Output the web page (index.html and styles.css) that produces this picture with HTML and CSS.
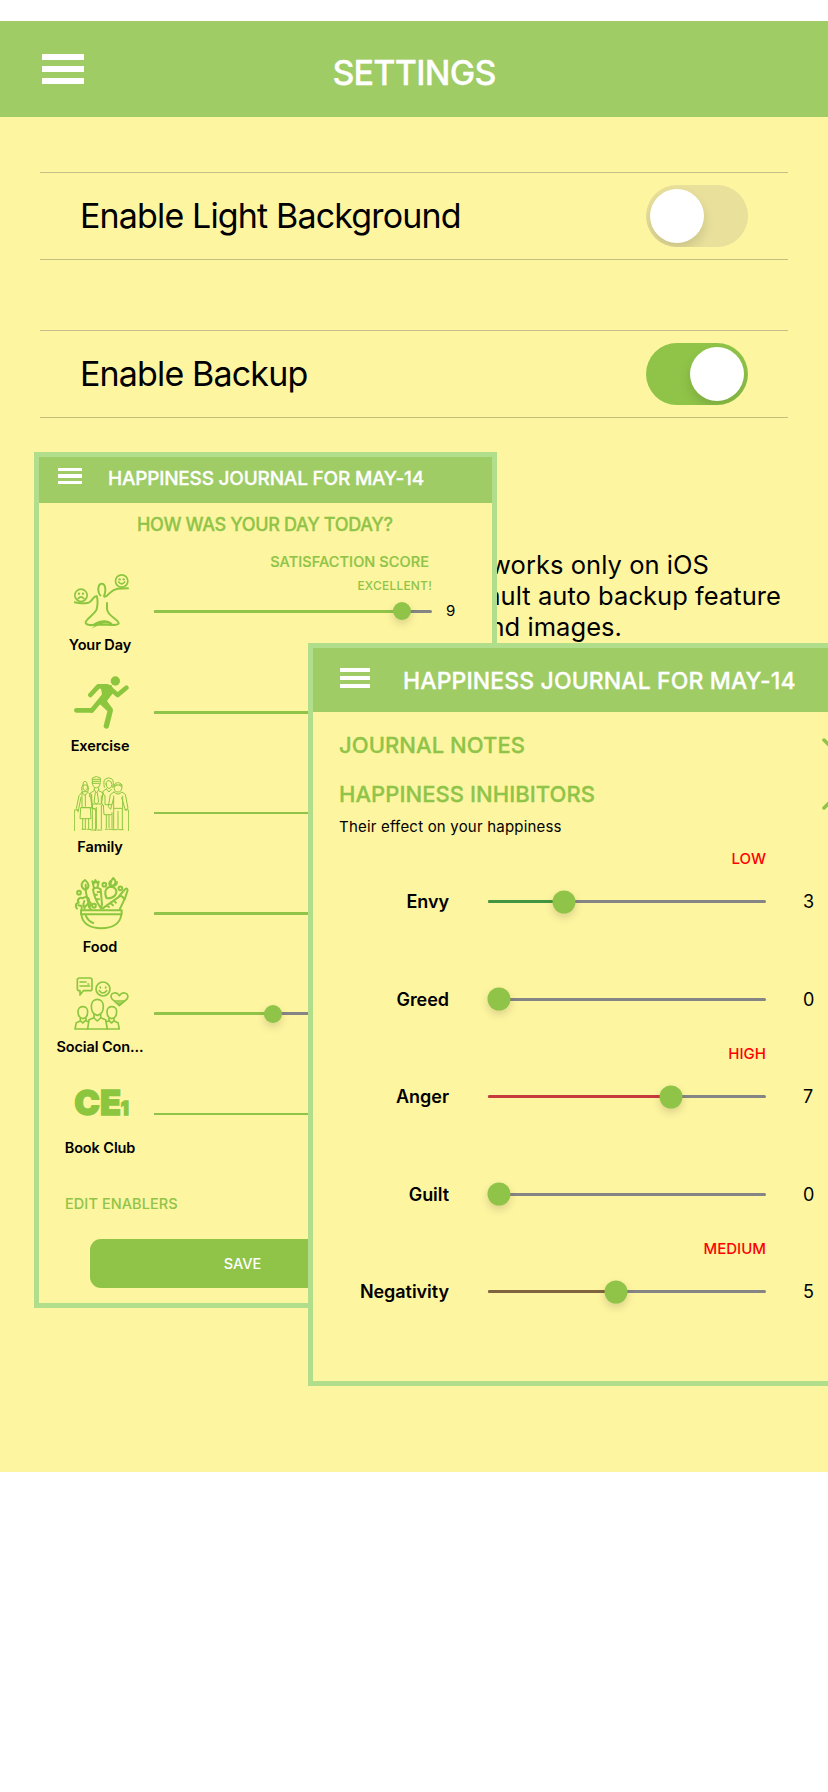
FILE: index.html
```html
<!DOCTYPE html>
<html lang="en">
<head>
<meta charset="utf-8">
<title>Settings</title>
<link rel="stylesheet" href="styles.css">
</head>
<body>
<main class="screen">
  <header class="topbar">
    <div class="burger"><i></i><i></i><i></i></div>
    <h1 class="topbar-title"><span>SETTINGS</span></h1>
  </header>

  <section class="setting">
    <span class="setting-label">Enable Light Background</span>
    <span class="toggle"></span>
  </section>
  <section class="setting">
    <span class="setting-label">Enable Backup</span>
    <span class="toggle on"></span>
  </section>
  <div class="note">
    <p class="note-a">works only on iOS</p>
    <p class="note-b">ault auto backup feature</p>
    <p class="note-c">nd images.</p>
  </div>

  <section class="card journal">
    <header class="card-head">
      <div class="burger"><i></i><i></i><i></i></div>
      <h2>HAPPINESS JOURNAL FOR MAY-14</h2>
    </header>
    <h3 class="question">HOW WAS YOUR DAY TODAY?</h3>
    <div class="score">SATISFACTION SCORE</div>
    <div class="rows">
      <div class="row first">
        <div class="who">
          <svg class="icon" viewBox="0 0 165 165">
            <g class="s5"><circle cx="143" cy="21" r="18.500"/><circle cx="21" cy="64" r="18.500"/>
            <path d="M134 24q9 11 18 0M12 74q9-11 18 0"/></g>
            <g class="f"><circle cx="137" cy="16" r="3.500"/><circle cx="149" cy="16" r="3.500"/><circle cx="15" cy="59" r="3.500"/><circle cx="27" cy="59" r="3.500"/>
            <path d="M52 165l10-9-13 1q17-17 40-18 17-1 30 13l-16-3q-21-4-51 16z"/></g>
            <path class="s6" d="M79 64C69 53 72 29 83 29c12 0 14 21 7 37q3 6 15-7c10-10 14-13 25-15q16 0 32-1M2 85q20 5 42 1c12-4 12-20 24-20 4 9 3 29 0 40-3 13-35 30-33 40 3 11 31 6 49 6 20 0 48 4 50-4 1-11-36-23-35-44V87"/>
          </svg>
          <span class="name">Your Day</span>
        </div>
        <div class="measure"><span class="level">EXCELLENT!</span>
          <div class="slider"><div class="fill" style="width:89.2%"></div><b class="thumb" style="left:89.2%"></b></div></div>
        <span class="value">9</span>
      </div>
      <div class="row">
        <div class="who">
          <svg class="icon" viewBox="0 0 165 165">
            <circle class="f" cx="124" cy="18" r="14"/>
            <path class="s14" d="M49 60l24-26h27l31 26 26-22M7 106h47l46-56"/>
            <path class="f" d="M79 30h33l9 19-22 29 18 25-13 5-26-21-22 26H48l36-55z"/>
            <path class="s16" d="M80 78l29 28-12 47"/>
          </svg>
          <span class="name">Exercise</span>
        </div>
        <div class="measure"><div class="slider"><div class="fill" style="width:100%"></div></div></div>
      </div>
      <div class="row">
        <div class="who">
          <svg class="icon" viewBox="0 0 165 165">
            <g class="s3">
            <path d="M24 46q-4-13 3-20 0-10 6-10t7 10q6 7 2 20zM28 27h12v13q-6 8-12 0zM24 49l8 9 10-9 9 9 5 38 7 4M24 49l-9 10-8 39 6 6 8-40M24 49v46h30L50 62M34 57v34M20 96l-2 32h33l-2-32zM26 128v30M34 128v30M44 128v30M24 160h12M40 160h10M1 164v-62h11v6M54 98h11v66"/>
            <path d="M55 20V6q12-9 24 0v14q0 14-12 16-12-2-12-16zM55 10h24M58 16h18M58 22h18M61 35v9l-12 7-3 11M74 35v9l14 7 3 9M61 42l6 8 7-8M64 50l-4 28 7 6 7-6-4-28M53 55v29h29V60M55 88v70M67 94v64M82 88v70M51 162h14M69 162h15"/>
            <path d="M91 34q-4-20 3-25 10-7 20 0 7 7 2 25M96 24q1-11 9-10 8 1 9 12 0 9-9 12-9-3-9-14zM98 38l-11 8-4 35 5 9M93 60v26h20M98 40l7 8 7-8M88 88l2 28h22M97 118v38M105 118v38M114 110v46M94 160h8M106 160h10"/>
            <path d="M120 35q-2-14 11-15 14 0 13 16l-3 8q-9 9-18 0zM120 27h24M121 32l8-5M136 27l7 5M120 48q12 13 24 0l10 7 8 42-8 5-11-37M120 48l-11 8-6 36 7 8 9-34M119 60v37h27V60M119 98v60M132 106v52M145 98v60M116 161h14M134 161h14M153 102h11v62"/>
            </g>
          </svg>
          <span class="name">Family</span>
        </div>
        <div class="measure"><div class="slider"><div class="fill" style="width:100%"></div></div></div>
      </div>
      <div class="row">
        <div class="who">
          <svg class="icon" viewBox="0 0 165 165">
            <g class="s6">
            <path d="M21 103h122v12H21zM22 116c4 28 28 41 60 41s56-13 60-41M35 118q7 17 23 23"/>
            <path d="M9 98c-7-7-3-18 5-18-7-10 5-18 13-13 8-9 23 0 17 10 9 1 9 12 0 14l6 9M13 88l10 2v10M31 75l-3 9 4 14M42 83l-8 9"/>
            <path d="M33 42c-15-9-12-22 0-30 11 9 16 21 2 30zM35 26l1 24 10 42"/>
            <path d="M57 40q10-10 23 0l4 45-3 12q-20-28-24-57zM60 36l-5-20 7 5 2-9 5 8 5-3-4 18M62 56h7M71 48h7M68 70h7"/>
            <path d="M98 67c-9-17-3-34 11-35 15 0 23 13 15 25q-9 11-26 10zM111 30c-3-10-1-16 7-24 10 10 8 19-4 24M108 29q-5-8 2-14M120 29q9-2 9-11"/>
            <path d="M86 97l54-38q7 2 11 12l-14 29M134 62l17-20q7-9 10 0l-9 28M98 89l7 4M109 81l8 7M120 75l6 5"/>
            <circle cx="15" cy="50" r="5.500"/><circle cx="91" cy="26" r="5.500"/><circle cx="139" cy="37" r="5.500"/><circle cx="60" cy="89" r="5.500"/>
            </g>
          </svg>
          <span class="name">Food</span>
        </div>
        <div class="measure"><div class="slider"><div class="fill" style="width:100%"></div></div></div>
      </div>
      <div class="row">
        <div class="who">
          <svg class="icon" viewBox="0 0 165 165">
            <g class="s5">
            <path d="M16 6h32q6 0 6 6v26q0 6-6 6H28L18 57V44q-8 0-8-6V12q0-6 6-6zM18 18h18M18 30h29M42 24h2"/>
            <circle cx="87" cy="39" r="21"/><path d="M76 44q11 14 22 0M79 33v3M95 33v3"/>
            <path d="M136 89l-22-20c-5-8-3-17 6-18 9-2 13 3 16 8 4-6 9-10 17-8 10 2 10 12 6 18zM121 75h29M130 81h13"/>
            <path d="M52 91c0-28 36-28 36 0 0 15-5 25-18 27-13-2-18-12-18-27zM60 114v11l-15 6-4 28M80 114v11l15 6 5 28M60 126l10 9 10-9"/>
            <path d="M12 107c0-20 29-20 29 0 0 13-4 19-14 21-11-2-15-8-15-21zM19 127v8l-12 5-4 19h133l-4-19-12-5v-8M36 127v7l7 3M19 134l7 7 8-7M99 107c0-20 29-20 29 0 0 13-4 19-15 21-10-2-14-8-14-21zM105 127v7l-8 3M105 134l8 7 7-7"/>
            </g>
          </svg>
          <span class="name">Social Con...</span>
        </div>
        <div class="measure"><div class="slider"><div class="fill" style="width:42.8%"></div><b class="thumb" style="left:42.8%"></b></div></div>
      </div>
      <div class="row">
        <div class="who">
          <svg class="icon" viewBox="0 0 165 165">
            <text class="ce" x="1" y="114" font-size="103" textLength="140" lengthAdjust="spacingAndGlyphs">CE</text>
            <text class="ce" x="140" y="114" font-size="57" textLength="24" lengthAdjust="spacingAndGlyphs">1</text>
          </svg>
          <span class="name">Book Club</span>
        </div>
        <div class="measure"><div class="slider"><div class="fill" style="width:100%"></div></div></div>
      </div>
    </div>
    <div class="edit">EDIT ENABLERS</div>
    <div class="save">SAVE</div>
  </section>

  <section class="card inhibitors">
    <header class="card-head">
      <div class="burger"><i></i><i></i><i></i></div>
      <h2>HAPPINESS JOURNAL FOR MAY-14</h2>
    </header>
    <div class="fold notes"><h3>JOURNAL NOTES</h3>
      <svg class="chevron" viewBox="0 0 22 14"><path d="M2 2l9 9 9-9"/></svg></div>
    <div class="fold effects"><h3>HAPPINESS INHIBITORS</h3>
      <svg class="chevron" viewBox="0 0 22 14"><path d="M2 12l9-9 9 9"/></svg></div>
    <p class="hint">Their effect on your happiness</p>
    <div class="factors">
      <div class="factor"><span class="fname">Envy</span>
        <div class="measure"><span class="level">LOW</span><div class="slider"><div class="fill low" style="width:27.5%"></div><b class="thumb" style="left:27.5%"></b></div></div>
        <span class="value">3</span></div>
      <div class="factor"><span class="fname">Greed</span>
        <div class="measure"><div class="slider"><b class="thumb" style="left:4.1%"></b></div></div>
        <span class="value">0</span></div>
      <div class="factor"><span class="fname">Anger</span>
        <div class="measure"><span class="level">HIGH</span><div class="slider"><div class="fill high" style="width:65.9%"></div><b class="thumb" style="left:65.9%"></b></div></div>
        <span class="value">7</span></div>
      <div class="factor"><span class="fname">Guilt</span>
        <div class="measure"><div class="slider"><b class="thumb" style="left:4.1%"></b></div></div>
        <span class="value">0</span></div>
      <div class="factor"><span class="fname">Negativity</span>
        <div class="measure"><span class="level">MEDIUM</span><div class="slider"><div class="fill medium" style="width:46.1%"></div><b class="thumb" style="left:46.1%"></b></div></div>
        <span class="value">5</span></div>
    </div>
  </section>
</main>
</body>
</html>
```
FILE: styles.css
```css
* { box-sizing: border-box; }
body { margin: 0; padding-top: 21px; background: #fff; color: #000; font-family: Inter, "Liberation Sans", sans-serif; overflow: hidden; }
h1, h2, h3, p { margin: 0; font-weight: 500; white-space: nowrap; }
h1, h2, h3 { -webkit-text-stroke: 0.3px currentColor; }
.screen { position: relative; height: 1451px; background: #fef5a1; overflow: hidden; }

.burger { display: flex; flex-direction: column; }
.burger i { display: block; background: #fff; }

.topbar { display: flex; height: 96px; padding-left: 42px; background: #9fcc65; color: #fff; }
.topbar .burger { gap: 6px; width: 42px; padding-top: 33px; }
.topbar .burger i { height: 6px; }
.topbar-title { width: 660px; text-align: center; font-size: 34px; line-height: 40px; padding-top: 32px; letter-spacing: -0.75px; }

.setting { display: flex; justify-content: space-between; align-items: center; height: 88px; margin: 55px 40px 0; padding: 0 40px; border-top: 1px solid #c6be8a; border-bottom: 1px solid #c3bf7c; }
.setting + .setting { margin-top: 70px; }
.setting-label { font-size: 34px; letter-spacing: -0.85px; line-height: 40px; }
.toggle { width: 102px; height: 62px; padding: 4px; border-radius: 31px; background: #e8e09b; overflow: hidden; }
.toggle::after { content: ""; display: block; width: 54px; height: 54px; border-radius: 50%; background: #fff; box-shadow: 0 6px 12px rgba(0,0,0,.13); }
.toggle.on { background: #8fc448; }
.toggle.on::after { margin-left: 40px; }

.note { padding-top: 131px; font-size: 25.500px; line-height: 31px; letter-spacing: 0.05px; text-align: right; }
.note p { font-weight: 400; }
.note-a { width: 709px; }
.note-b { width: 781px; }
.note-c { width: 622px; }

.card { position: absolute; border: 5px solid #b1de8a; background: #fef5a1; }
.card-head { display: flex; background: #9fcc65; color: #fff; }
.card h3, .level, .score, .edit { color: #8fc448; }

.slider { position: relative; height: 3px; border-radius: 2px; background: #858585; }
.fill { height: 100%; border-radius: 2px; background: #8fc448; }
.fill.low { background: #43963f; }
.fill.high { background: #c73a3c; }
.fill.medium { background: #7f643e; }
.thumb { position: absolute; top: 50%; width: 18px; height: 18px; border-radius: 50%; transform: translate(-50%, -50%); background: #8fc448; box-shadow: 0 4px 8px rgba(0,0,0,.15); }
.measure { position: relative; }
.level { position: absolute; right: 0; font-weight: 500; white-space: nowrap; }

.journal { left: 34px; top: 431px; width: 463px; height: 856px; }
.journal .card-head { height: 46px; padding-left: 19px; }
.journal .burger { gap: 3px; width: 24px; padding-top: 11px; }
.journal .burger i { height: 3.400px; }
.journal h2 { margin-left: 26px; padding-top: 11px; font-size: 19px; line-height: 22px; letter-spacing: -0.2px; }
.question { margin: 11px 0 0 98px; font-size: 18px; line-height: 22px; letter-spacing: -0.33px; }
.score { width: 390px; margin-top: 18px; text-align: right; font-size: 14.500px; line-height: 16px; font-weight: 500; letter-spacing: 0.08px; -webkit-text-stroke: 0.2px currentColor; }
.rows { margin: 4px 0 0 11px; }
.row { display: grid; grid-template-columns: 100px 278px 40px; column-gap: 4px; height: 100.400px; }
.row.first { height: 101.300px; }
.who { display: flex; flex-direction: column; align-items: center; }
.icon { width: 55px; height: 55px; flex: none; margin-left: 2px; }
.name { margin-top: 7px; font-size: 14.500px; line-height: 18px; font-weight: 600; letter-spacing: -0.1px; white-space: nowrap; }
.row .measure { padding-top: 36px; }
.row .slider { height: 2.500px; }
.row .level { top: 3.500px; font-size: 12px; line-height: 16px; letter-spacing: 0.2px; }
.row .value { padding: 27px 0 0 10px; font-size: 15px; line-height: 20px; }
.edit { margin: 18px 0 0 26px; font-size: 14.500px; line-height: 18px; font-weight: 500; letter-spacing: 0.08px; }
.save { width: 305px; height: 49px; margin: 26px 0 0 51px; border-radius: 11px; background: #8fc448; color: #fff; text-align: center; font-size: 14.500px; line-height: 49px; font-weight: 500; }

.inhibitors { left: 308px; top: 622px; width: 600px; height: 743px; }
.inhibitors .card-head { height: 64px; padding-left: 27px; }
.inhibitors .burger { gap: 4px; width: 30px; padding-top: 20px; }
.inhibitors .burger i { height: 4px; }
.inhibitors h2 { margin-left: 33px; padding-top: 20px; font-size: 23px; line-height: 27px; letter-spacing: 0.12px; }
.fold { display: flex; margin-left: 26px; }
.fold h3 { width: 483px; font-size: 22px; line-height: 26px; letter-spacing: 0.06px; }
.notes { margin-top: 20px; }
.effects { margin-top: 23px; }
.chevron { width: 22px; height: 14px; flex: none; fill: none; stroke: #8fc448; stroke-width: 3.5; stroke-linecap: round; }
.effects .chevron { margin-top: 15px; }
.notes .chevron { margin-top: 6px; }
.hint { margin: 8px 0 0 26px; font-size: 15px; line-height: 18px; font-weight: 400; letter-spacing: 0.2px; }
.factors { margin-top: 12px; }
.factor { display: grid; grid-template-columns: 136px 278px 44px; column-gap: 39px; height: 97.500px; }
.factor .level { color: #f00; top: 1px; font-size: 15px; line-height: 20px; }
.fname { padding-top: 43px; text-align: right; font-size: 18px; line-height: 22px; font-weight: 600; letter-spacing: -0.05px; }
.factor .measure { padding-top: 52px; }
.factor .thumb { width: 23px; height: 23px; }
.factor .value { margin-left: -2px; padding-top: 43px; font-size: 18px; line-height: 22px; }

.s3, .s5, .s6, .s14, .s16 { fill: none; stroke: #8cc63f; stroke-linecap: round; stroke-linejoin: round; }
.s3 { stroke-width: 3; }
.s5 { stroke-width: 5; }
.s6 { stroke-width: 6; }
.s14 { stroke-width: 14; }
.s16 { stroke-width: 16; }
.f, .ce { fill: #8cc63f; }
.ce { font-family: Inter, sans-serif; font-weight: 900; stroke: #8cc63f; stroke-width: 4; }
```
